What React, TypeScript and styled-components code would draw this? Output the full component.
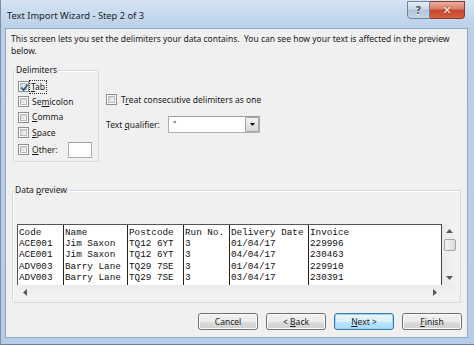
import React from "react";
import styled, { createGlobalStyle } from "styled-components";

const UI = `"Noto Sans", "Open Sans", sans-serif`;
const MONO = `"Liberation Mono", "DejaVu Sans Mono", monospace`;

const Global = createGlobalStyle`
  html, body { margin: 0; padding: 0; width: 474px; height: 345px; overflow: hidden; background: #b9d0ea; }
  * { box-sizing: border-box; }
  #root { width: 474px; height: 345px; }
`;

const Window = styled.div`
  width: 474px;
  height: 345px;
  display: flex;
  flex-direction: column;
  background: linear-gradient(180deg, #d6e5f4 0px, #c6d9ee 14px, #bbd1ea 28px, #b6cde8 100%);
  border-left: 1px solid #7b8fa7;
  border-bottom: 1px solid #6f8096;
  font-family: ${UI};
  color: #1a1a1a;
`;

const TitleBar = styled.div`
  height: 28px;
  flex: none;
  display: flex;
  align-items: flex-start;
`;

const Title = styled.div`
  margin: 9px 0 0 6px;
  font-size: 9.3px;
  line-height: 13px;
  color: #1e1e1e;
`;

const Controls = styled.div`
  margin-left: auto;
  margin-right: 9px;
  margin-top: 1px;
  display: flex;
`;

const CaptionButton = styled.div<{ $kind: "help" | "close" }>`
  height: 18px;
  width: ${(p) => (p.$kind === "close" ? 35 : 23)}px;
  display: flex;
  align-items: center;
  justify-content: center;
  border: 1px solid ${(p) => (p.$kind === "close" ? "#8a3a2e" : "#6f839c")};
  border-left-width: ${(p) => (p.$kind === "close" ? 0 : 1)}px;
  border-radius: ${(p) => (p.$kind === "close" ? "0 0 4px 0" : "0 0 0 4px")};
  background: ${(p) =>
    p.$kind === "close"
      ? "linear-gradient(180deg, #eab0a2 0%, #d97a66 45%, #c8452c 50%, #d2623f 100%)"
      : "linear-gradient(180deg, #e6eef7 0%, #c9d7e6 45%, #b3c5d9 50%, #c5d5e5 100%)"};
  color: ${(p) => (p.$kind === "close" ? "#ffffff" : "#45566d")};
  font-family: "DejaVu Sans", sans-serif;
  font-weight: bold;
  font-size: ${(p) => (p.$kind === "close" ? 11 : 10)}px;
  text-shadow: ${(p) => (p.$kind === "close" ? "0 0 2px #6b1d10" : "0 1px 0 #f2f6fb")};
`;

const Client = styled.div`
  flex: 1;
  margin: 0 6px 6px 4px;
  border: 1px solid #95a6ba;
  background: #f0f0f0;
  display: flex;
  flex-direction: column;
  font-size: 8.5px;
  line-height: 12px;
`;

const Intro = styled.p`
  margin: 0;
  padding: 4px 0 0 5px;
`;

const MidRow = styled.div`
  display: flex;
  margin-top: 13px;
  padding-left: 7px;
`;

const GroupBox = styled.div<{ $w: number; $h: number }>`
  width: ${(p) => p.$w}px;
  height: ${(p) => p.$h}px;
  border: 1px solid #d3dbe2;
  border-radius: 2px;
  box-shadow: inset 1px 1px 0 #ffffff;
  display: flex;
  flex-direction: column;
  align-items: flex-start;
`;

const GroupTitle = styled.div`
  margin: -7px 0 0 1px;
  padding: 0 1px;
  background: #f0f0f0;
  line-height: 12px;
`;

const CheckList = styled.div`
  display: flex;
  flex-direction: column;
  padding: 3px 0 0 4px;
`;

const CheckRow = styled.div<{ $h: number; $gap?: number }>`
  height: ${(p) => p.$h}px;
  display: flex;
  align-items: center;
  gap: ${(p) => p.$gap ?? 3}px;
`;

const Box = styled.span`
  width: 11px;
  height: 11px;
  flex: none;
  border: 1px solid #8e8f8f;
  background: #ffffff;
  padding: 1px;
  display: flex;
`;

const BoxInner = styled.span`
  flex: 1;
  border: 1px solid #b4b9bf;
  background: linear-gradient(135deg, #cfd3d8 0%, #e9eaec 60%, #f7f7f7 100%);
  position: relative;
`;

const CheckMark = styled.svg`
  position: absolute;
  left: -2px;
  top: -2px;
`;

const Focus = styled.span`
  outline: 1px dotted #333;
  outline-offset: 0;
  padding: 0 1px;
  line-height: 12px;
`;

const SmallInput = styled.span`
  width: 24px;
  height: 16px;
  margin-left: 7px;
  border: 1px solid #abadb3;
  border-top-color: #9a9da4;
  background: #ffffff;
`;

const RightCol = styled.div`
  display: flex;
  flex-direction: column;
  margin-left: 7px;
  padding-top: 22px;
`;

const QualRow = styled.div`
  display: flex;
  align-items: center;
  margin-top: 9px;
  height: 17px;
`;

const QualLabel = styled.span`
  width: 62px;
`;

const Select = styled.div`
  width: 92px;
  height: 17px;
  border: 1px solid #abadb3;
  border-top-color: #9a9da4;
  background: #ffffff;
  display: flex;
  align-items: center;
  padding-left: 4px;
`;

const SelectValue = styled.span`
  flex: 1;
  font-size: 8px;
`;

const DropButton = styled.span`
  width: 14px;
  height: 15px;
  border: 1px solid #a6a6a6;
  border-radius: 1px;
  background: linear-gradient(180deg, #f3f3f3 0%, #e6e6e6 50%, #d6d6d6 100%);
  display: flex;
  align-items: center;
  justify-content: center;
`;

const PreviewGroup = styled.div`
  margin: 28px 0 0 6px;
  width: 449px;
  height: 113px;
  border: 1px solid #d3dbe2;
  border-radius: 2px;
  box-shadow: inset 1px 1px 0 #ffffff;
  display: flex;
  flex-direction: column;
  align-items: flex-start;
`;

const PreviewBox = styled.div`
  margin: 28px 0 0 4px;
  width: 440px;
  height: 76px;
  display: grid;
  grid-template-columns: 1fr 15px;
  grid-template-rows: 61px 15px;
`;

const Grid = styled.div`
  background: #ffffff;
  border-top: 1px solid #555;
  border-left: 1px solid #555;
  border-right: 1px solid #444;
  display: flex;
  font-family: ${MONO};
  font-size: 9.3px;
  line-height: 11.2px;
  color: #111;
  overflow: hidden;
`;

const Col = styled.div<{ $w?: number; $first?: boolean }>`
  ${(p) => (p.$w ? `width: ${p.$w}px; flex: none;` : "flex: 1;")}
  border-left: ${(p) => (p.$first ? "none" : "1px solid #222")};
  padding: 2px 0 0 1px;
  white-space: pre;
  overflow: hidden;
`;

const VScroll = styled.div`
  background: linear-gradient(90deg, #e9e9eb, #f3f3f4);
  display: flex;
  flex-direction: column;
  align-items: center;
`;

const ArrowCell = styled.div`
  height: 14px;
  width: 15px;
  display: flex;
  align-items: center;
  justify-content: center;
  flex: none;
`;

const Thumb = styled.div`
  width: 12px;
  height: 12px;
  margin-top: 1px;
  border: 1px solid #a3a3a3;
  border-radius: 2px;
  background: linear-gradient(90deg, #f4f4f4 0%, #e8e8e8 50%, #dcdcdc 100%);
`;

const Spacer = styled.div`
  flex: 1;
`;

const HScroll = styled.div`
  grid-column: 1 / span 2;
  background: linear-gradient(180deg, #ececee, #f4f4f5);
  display: flex;
  align-items: center;
  padding-right: 15px;
`;

const ButtonRow = styled.div`
  display: flex;
  justify-content: flex-end;
  gap: 8px;
  margin-top: 10px;
  padding-right: 5px;
`;

const Button = styled.div<{ $default?: boolean }>`
  width: 60px;
  height: 17px;
  display: flex;
  align-items: center;
  justify-content: center;
  border: 1px solid ${(p) => (p.$default ? "#3d7bad" : "#707070")};
  border-radius: 3px;
  background: ${(p) =>
    p.$default
      ? "linear-gradient(180deg, #eaf6fd 0%, #d9f0fc 50%, #bee6fd 51%, #a7d9f5 100%)"
      : "linear-gradient(180deg, #f2f2f2 0%, #ebebeb 50%, #dddddd 51%, #cfcfcf 100%)"};
  box-shadow: inset 0 0 0 1px ${(p) => (p.$default ? "#9fd5f3" : "#fbfbfb")};
  color: #1a1a1a;
`;

const Tri = ({ dir }: { dir: "up" | "down" | "left" | "right" }) => {
  const pts = {
    up: "0,4 3.5,0 7,4",
    down: "0,0 7,0 3.5,4",
    left: "4,0 4,7 0,3.5",
    right: "0,0 0,7 4,3.5",
  }[dir];
  const vertical = dir === "up" || dir === "down";
  return (
    <svg width={vertical ? 7 : 4} height={vertical ? 4 : 7} viewBox={vertical ? "0 0 7 4" : "0 0 4 7"}>
      <polygon points={pts} fill="#5a5a5a" />
    </svg>
  );
};

const Check = ({ checked }: { checked?: boolean }) => (
  <Box>
    <BoxInner>
      {checked && (
        <CheckMark width="11" height="11" viewBox="0 0 11 11">
          <path d="M2.6 5.6 L4.6 8.2 L8.6 2.4" fill="none" stroke="#34528f" strokeWidth="1.7" />
        </CheckMark>
      )}
    </BoxInner>
  </Box>
);

const columns: { w?: number; cells: string[] }[] = [
  { w: 45, cells: ["Code", "ACE001", "ACE001", "ADV003", "ADV003"] },
  { w: 64, cells: ["Name", "Jim Saxon", "Jim Saxon", "Barry Lane", "Barry Lane"] },
  { w: 56, cells: ["Postcode", "TQ12 6YT", "TQ12 6YT", "TQ29 7SE", "TQ29 7SE"] },
  { w: 46, cells: ["Run No.", "3", "3", "3", "3"] },
  { w: 79, cells: ["Delivery Date", "01/04/17", "04/04/17", "01/04/17", "03/04/17"] },
  { cells: ["Invoice", "229996", "230463", "229910", "230391"] },
];

export default function App() {
  return (
    <>
      <Global />
      <Window>
        <TitleBar>
          <Title>Text Import Wizard - Step 2 of 3</Title>
          <Controls>
            <CaptionButton $kind="help">?</CaptionButton>
            <CaptionButton $kind="close">✕</CaptionButton>
          </Controls>
        </TitleBar>
        <Client>
          <Intro>
            This screen lets you set the delimiters your data contains.&nbsp; You can see how your text is affected in the preview
            <br />
            below.
          </Intro>
          <MidRow>
            <GroupBox $w={86} $h={92}>
              <GroupTitle>Delimiters</GroupTitle>
              <CheckList>
                <CheckRow $h={15} $gap={1}>
                  <Check checked />
                  <Focus>
                    <u>T</u>ab
                  </Focus>
                </CheckRow>
                <CheckRow $h={15}>
                  <Check />
                  <span>
                    Se<u>m</u>icolon
                  </span>
                </CheckRow>
                <CheckRow $h={16}>
                  <Check />
                  <span>
                    <u>C</u>omma
                  </span>
                </CheckRow>
                <CheckRow $h={15}>
                  <Check />
                  <span>
                    <u>S</u>pace
                  </span>
                </CheckRow>
                <CheckRow $h={19}>
                  <Check />
                  <span>
                    <u>O</u>ther:
                  </span>
                  <SmallInput />
                </CheckRow>
              </CheckList>
            </GroupBox>
            <RightCol>
              <CheckRow $h={15} $gap={4}>
                <Check />
                <span>
                  T<u>r</u>eat consecutive delimiters as one
                </span>
              </CheckRow>
              <QualRow>
                <QualLabel>
                  Text <u>q</u>ualifier:
                </QualLabel>
                <Select>
                  <SelectValue>"</SelectValue>
                  <DropButton>
                    <svg width="5" height="3" viewBox="0 0 5 3">
                      <polygon points="0,0 5,0 2.5,3" fill="#000" />
                    </svg>
                  </DropButton>
                </Select>
              </QualRow>
            </RightCol>
          </MidRow>
          <PreviewGroup>
            <GroupTitle>
              Data <u>p</u>review
            </GroupTitle>
            <PreviewBox>
              <Grid>
                {columns.map((c, i) => (
                  <Col key={i} $w={c.w} $first={i === 0}>
                    {c.cells.join("\n")}
                  </Col>
                ))}
              </Grid>
              <VScroll>
                <ArrowCell>
                  <Tri dir="up" />
                </ArrowCell>
                <Thumb />
                <Spacer />
                <ArrowCell>
                  <Tri dir="down" />
                </ArrowCell>
              </VScroll>
              <HScroll>
                <ArrowCell>
                  <Tri dir="left" />
                </ArrowCell>
                <Spacer />
                <ArrowCell>
                  <Tri dir="right" />
                </ArrowCell>
              </HScroll>
            </PreviewBox>
          </PreviewGroup>
          <ButtonRow>
            <Button>
              <span>Cancel</span>
            </Button>
            <Button>
              <span>
                &lt; <u>B</u>ack
              </span>
            </Button>
            <Button $default>
              <span>
                <u>N</u>ext &gt;
              </span>
            </Button>
            <Button>
              <span>
                <u>F</u>inish
              </span>
            </Button>
          </ButtonRow>
        </Client>
      </Window>
    </>
  );
}
